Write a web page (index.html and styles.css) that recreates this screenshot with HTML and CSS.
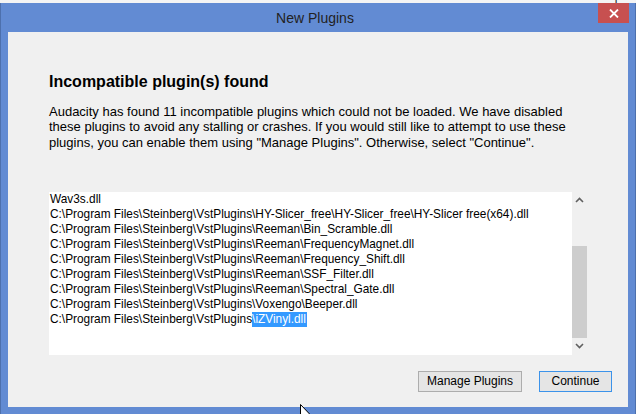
FILE: index.html
```html
<!DOCTYPE html>
<html>
<head>
<meta charset="utf-8">
<link rel="stylesheet" href="styles.css">
</head>
<body>
<div class="desktop"><span class="desktop-text">Audio Setup</span></div>
<div class="window">
  <div class="titlebar">
    <span></span>
    <span class="title">New Plugins</span>
    <button class="close" aria-label="Close">
      <svg width="10" height="9" viewBox="0 0 10 9"><path d="M1 0.5 L9 8.5 M9 0.5 L1 8.5" stroke="#fff" stroke-width="1.8"/></svg>
    </button>
  </div>
  <div class="client">
    <h1 class="heading">Incompatible plugin(s) found</h1>
    <p class="message">Audacity has found 11 incompatible plugins which could not be loaded. We have disabled these plugins to avoid any stalling or crashes. If you would still like to attempt to use these plugins, you can enable them using "Manage Plugins". Otherwise, select "Continue".</p>
    <div class="listbox">
      <div class="list">
        <div class="line">Wav3s.dll</div>
        <div class="line">C:\Program Files\Steinberg\VstPlugins\HY-Slicer_free\HY-Slicer_free\HY-Slicer free(x64).dll</div>
        <div class="line">C:\Program Files\Steinberg\VstPlugins\Reeman\Bin_Scramble.dll</div>
        <div class="line">C:\Program Files\Steinberg\VstPlugins\Reeman\FrequencyMagnet.dll</div>
        <div class="line">C:\Program Files\Steinberg\VstPlugins\Reeman\Frequency_Shift.dll</div>
        <div class="line">C:\Program Files\Steinberg\VstPlugins\Reeman\SSF_Filter.dll</div>
        <div class="line">C:\Program Files\Steinberg\VstPlugins\Reeman\Spectral_Gate.dll</div>
        <div class="line">C:\Program Files\Steinberg\VstPlugins\Voxengo\Beeper.dll</div>
        <div class="line">C:\Program Files\Steinberg\VstPlugins<span class="selected">\iZVinyl.dll</span></div>
      </div>
      <div class="scrollbar">
        <div class="arrow">
          <svg width="9" height="6" viewBox="0 0 9 6"><path d="M1 5 L4.5 1.5 L8 5" fill="none" stroke="#606060" stroke-width="1.6"/></svg>
        </div>
        <div class="track"><div class="thumb"></div></div>
        <div class="arrow">
          <svg width="9" height="6" viewBox="0 0 9 6"><path d="M1 1 L4.5 4.5 L8 1" fill="none" stroke="#606060" stroke-width="1.6"/></svg>
        </div>
      </div>
    </div>
    <div class="buttons">
      <button class="btn btn-manage">Manage Plugins</button>
      <button class="btn btn-continue">Continue</button>
    </div>
  </div>
</div>
<svg class="cursor" width="12" height="19" viewBox="0 0 12 19"><path d="M0.5 0.5 L0.5 16 L4 12.5 L6.5 18 L8.5 17 L6 11.5 L11 11.5 Z" fill="#fff" stroke="#000" stroke-width="1"/></svg>
</body>
</html>
```
FILE: styles.css
```css
* { box-sizing: border-box; }
html, body {
  margin: 0;
  padding: 0;
  width: 636px;
  height: 414px;
  overflow: hidden;
  background: #f4f4f4;
  position: relative;
}
.desktop {
  height: 3px;
  overflow: hidden;
  background: #f4f4f4;
}
.desktop-text {
  display: block;
  margin-top: -10px;
  padding-left: 556px;
  font: 12px "Liberation Sans", Arial, sans-serif;
  color: #222;
  line-height: 13px;
}
.window {
  height: 411px;
  background: #628bd3;
  border: 1px solid #4d70ad;
  border-top: none;
  border-bottom: none;
  display: flex;
  flex-direction: column;
}
.titlebar {
  height: 29px;
  display: grid;
  grid-template-columns: 1fr auto 1fr;
  padding-right: 6px;
}
.title {
  align-self: center;
  font: 14px "Liberation Sans", Arial, sans-serif;
  color: #222;
  padding-top: 1px;
}
.close {
  justify-self: end;
  align-self: start;
  width: 31px;
  height: 20px;
  border: none;
  margin: 0;
  padding: 0;
  background: #c75050;
  display: flex;
  align-items: center;
  justify-content: center;
}
.client {
  margin: 0 7px;
  height: 375px;
  background: #f0f0f0;
  padding: 41px 39px 15px 41px;
  display: flex;
  flex-direction: column;
}
.heading {
  margin: 0;
  font: bold 16px/18px "Liberation Sans", Arial, sans-serif;
  color: #000;
}
.message {
  margin: 12.5px 0 0;
  font: 13px/15.67px "Liberation Sans", Arial, sans-serif;
  color: #000;
}
.listbox {
  margin-top: 41px;
  height: 163px;
  display: flex;
}
.list {
  flex: 1;
  background: #fff;
  padding-left: 1px;
  font: 11.85px/15px "Liberation Sans", Arial, sans-serif;
  color: #000;
  white-space: nowrap;
  overflow: hidden;
}
.selected {
  display: inline-block;
  background: #3399ff;
  color: #fff;
  padding-right: 1px;
}
.scrollbar {
  width: 17px;
  background: #f0f0f0;
  display: flex;
  flex-direction: column;
}
.arrow {
  height: 17px;
  display: flex;
  align-items: center;
  justify-content: center;
  padding-right: 2px;
}
.track {
  flex: 1;
  padding-top: 37px;
}
.thumb {
  width: 15px;
  height: 92px;
  background: #cdcdcd;
}
.buttons {
  margin-top: 16px;
  display: flex;
  justify-content: flex-end;
  gap: 17px;
  margin-right: -23px;
}
.btn {
  height: 21px;
  margin: 0;
  padding: 0;
  border: 1px solid #adadad;
  background: #e5e5e5;
  font: 12px "Liberation Sans", Arial, sans-serif;
  color: #000;
}
.btn-manage { width: 104px; }
.btn-continue {
  width: 73px;
  border-color: #3c93ea;
}
.cursor {
  position: absolute;
  left: 300px;
  top: 404px;
}
```
